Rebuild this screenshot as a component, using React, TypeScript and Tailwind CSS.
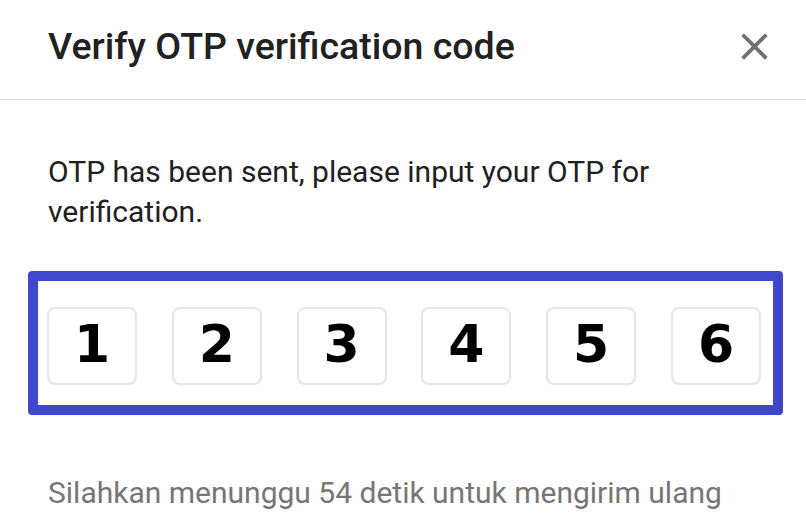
const digits = ["1", "2", "3", "4", "5", "6"];

export default function App() {
  return (
    <div className="h-[528px] w-[806px] overflow-hidden bg-white font-['Roboto',sans-serif]">
      <div className="flex h-[100px] items-center justify-between border-b border-[#e0e0e0] pl-12 pr-[29px] pb-[7px]">
        <h1 className="text-[37.5px] font-medium leading-10 text-[#212121]">Verify OTP verification code</h1>
        <button className="text-[#707070]" aria-label="close">
          <svg width="45" height="45" viewBox="0 0 24 24" fill="currentColor">
            <path d="M19 6.41L17.59 5 12 10.59 6.41 5 5 6.41 10.59 12 5 17.59 6.41 19 12 13.41 17.59 19 19 17.59 13.41 12z" />
          </svg>
        </button>
      </div>

      <div className="pt-[52px]">
        <p className="px-12 text-[30px] leading-10 text-[#212121]">
          OTP has been sent, please input your OTP for verification.
        </p>

        <div className="ml-[28px] mt-[39px] w-[755px] rounded-[4px] border-[10px] border-[#3f48cc] pb-[20px] pl-[9px] pr-[12px] pt-[26px]">
          <div className="flex justify-between">
            {digits.map((d) => (
              <div
                key={d}
                className="flex h-[78px] w-[90px] items-center justify-center rounded-lg border-2 border-[#e6e6e6] pb-[5px] font-['DejaVu_Sans',sans-serif] text-[52px] font-bold leading-none text-black"
              >
                {d}
              </div>
            ))}
          </div>
        </div>

        <p className="mt-[58px] px-12 text-[30px] leading-10 text-[#767676]">
          Silahkan menunggu 54 detik untuk mengirim ulang
        </p>
      </div>
    </div>
  );
}
